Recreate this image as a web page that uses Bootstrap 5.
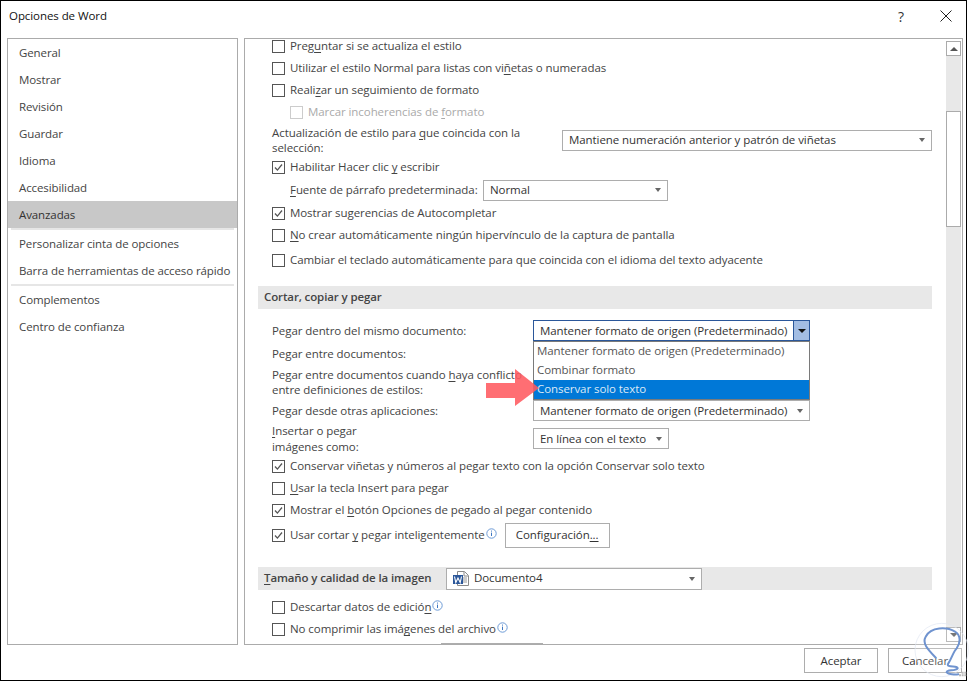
<!DOCTYPE html>
<html lang="es">
<head>
<meta charset="utf-8">
<title>Opciones de Word</title>
<link href="https://cdn.jsdelivr.net/npm/bootstrap@5.3.0/dist/css/bootstrap.min.css" rel="stylesheet">
<style>
html,body{height:100%;}
body{margin:0;background:#fff;font-family:"Open Sans","Noto Sans",sans-serif;font-size:11.5px;letter-spacing:-.07px;color:#444;overflow:hidden;}
u{text-underline-offset:2px;}
.win{width:967px;height:681px;border:1px solid #000;background:#fff;position:relative;}
.tbar{height:37px;padding-left:8px;padding-bottom:7px;color:#111;}
.tbar-help{width:50px;text-align:center;color:#333;font-size:14px;}
.tbar-close{width:40px;text-align:center;line-height:0;}
.mainarea{height:607px;padding:0 3px 0 6px;gap:6px;}
.side{width:231px;border:1px solid #ababab;flex:none;}
.sitem{height:27px;padding-left:11px;line-height:27px;color:#444;letter-spacing:-.1px;white-space:nowrap;}
.sitem.on{background:#c8c8c8;color:#333;}
.ssep{height:2px;margin:0 3px;background:#e6e6e6;}
.panel{width:719px;border:1px solid #ababab;overflow:hidden;position:relative;flex:none;}
.scroller{width:700px;margin-top:-4px;padding:0 13px 0 13px;flex:none;}
.sb{width:15px;margin:2px 1px 2px 0;background:#e8e8e8;flex:none;}
.sb-btn{height:15px;width:15px;background:#fff;border:1px solid #ababab;flex:none;}
.sb-thumb{height:116px;margin-top:55px;background:#fff;border:1px solid #ababab;flex:none;}
.opt{height:22px;padding-left:14px;gap:5px;white-space:nowrap;}
.opt.sub{padding-left:32px;color:#aaa;}
.ind-32{padding-left:32px;}
.h-21{height:21px;padding-bottom:1px;}.h-24{height:24px;}.h-23{height:23px;}.h-28{height:28px;}.h-33{height:33px;}.h-34{height:34px;}
.wrapl{line-height:15.5px;white-space:normal;}
.cb{width:13px;height:13px;border:1px solid #555;background:#fff;flex:none;}
.sub .cb{border-color:#ccc;}
.cb svg{display:block;}
.sel{border:1px solid #adadad;background:#fff;height:21px;padding:0 6px;color:#333;flex:none;white-space:nowrap;position:relative;}
.sel.focusb{border-color:#2b579a;padding-right:0;}
.w-370{width:370px;}.w-185{width:185px;}.w-277{width:277px;}.w-136{width:136px;}.w-256{width:256px;height:22px;}
.caret-s{margin-left:auto;width:0;height:0;border-left:3.5px solid transparent;border-right:3.5px solid transparent;border-top:4px solid #666;flex:none;}
.drop-btn{width:16px;height:19px;background:#a3bde3;border-left:1px solid #2b579a;flex:none;margin-left:auto;}
.caret-d{width:0;height:0;border-left:4px solid transparent;border-right:4px solid transparent;border-top:4px solid #111;}
.sec{padding:0 6px;height:23px;background:#e8e8e8;width:674px;font-weight:600;letter-spacing:-.12px;color:#444;white-space:nowrap;flex:none;}
.sec-t{margin-top:-2px;}
.sec-l{width:182px;flex:none;margin-top:-2px;}
.mt-12{margin-top:12px;}.mt-10{margin-top:10px;}.mt-18{margin-top:18px;}.mt-6{margin-top:6px;}
.w-l-285{width:285px;flex:none;}
.w-l-256{width:256px;flex:none;}
.w-l-188{width:188px;flex:none;}
.pbtn{border:1px solid #adadad;background:#fff;color:#333;height:25px;width:105px;flex:none;margin-left:3px;}
.info{flex:none;margin-left:-4px;margin-top:-3px;}
.menu-ov{position:absolute;left:532px;top:340px;width:277px;height:59px;border:1px solid #7a7a7a;background:#fff;z-index:3;}
.menu-i{height:19px;padding-left:3px;line-height:18px;color:#555;white-space:nowrap;}
.menu-i.act{background:#0078d7;color:#dbe9f6;}
.arrow-ov{position:absolute;left:484px;top:367px;z-index:4;}
.partial{width:102px;height:10px;border:1px solid #adadad;margin-left:183px;margin-top:3px;}
.foot{height:35px;padding:3px 4px 0 0;gap:10px;}
.fbtn{width:74px;height:25px;border:1px solid #adadad;background:#fff;color:#333;}
.wm{position:absolute;left:904px;top:614px;z-index:5;}
</style>
</head>
<body>
<div class="win">
  <div class="tbar d-flex align-items-center">
    <span class="flex-grow-1">Opciones de Word</span>
    <span class="tbar-help">?</span>
    <span class="tbar-close"><svg width="12" height="12" viewBox="0 0 12 12"><path d="M.5.5l11 11M11.5.5l-11 11" stroke="#222" stroke-width="1" fill="none"/></svg></span>
  </div>
  <div class="mainarea d-flex">
    <div class="side">
      <div class="sitem">General</div>
      <div class="sitem">Mostrar</div>
      <div class="sitem">Revisión</div>
      <div class="sitem">Guardar</div>
      <div class="sitem">Idioma</div>
      <div class="sitem">Accesibilidad</div>
      <div class="sitem on">Avanzadas</div>
      <div class="ssep"></div>
      <div class="sitem">Personalizar cinta de opciones</div>
      <div class="sitem">Barra de herramientas de acceso rápido</div>
      <div class="ssep"></div>
      <div class="sitem">Complementos</div>
      <div class="sitem">Centro de confianza</div>
    </div>
    <div class="panel d-flex justify-content-between">
      <div class="scroller">
        <div class="opt d-flex align-items-center"><span class="cb"></span><span>Preg<u>u</u>ntar si se actualiza el estilo</span></div>
        <div class="opt d-flex align-items-center"><span class="cb"></span><span>Utilizar el estilo Normal para listas con vi<u>ñ</u>etas o numeradas</span></div>
        <div class="opt d-flex align-items-center"><span class="cb"></span><span>Reali<u>z</u>ar un seguimiento de formato</span></div>
        <div class="opt sub d-flex align-items-center"><span class="cb"></span><span>Marcar incoherencias de <u>f</u>ormato</span></div>
        <div class="opt h-34 d-flex align-items-center"><span class="wrapl w-l-285">Actualización de estilo para <u>q</u>ue coincida con la<br>selección:</span><span class="sel w-370 d-flex align-items-center">Mantiene numeración anterior y patrón de viñetas<i class="caret-s"></i></span></div>
        <div class="opt h-21 d-flex align-items-center"><span class="cb"><svg width="11" height="11" viewBox="0 0 11 11"><path d="M2 5.5l2.4 2.6L9 2.5" stroke="#555" stroke-width="1.3" fill="none"/></svg></span><span>Habilitar Hacer clic <u>y</u> escribir</span></div>
        <div class="opt ind-32 h-24 d-flex align-items-center"><span class="w-l-188"><u>F</u>uente de párrafo predeterminada:</span><span class="sel w-185 d-flex align-items-center">Normal<i class="caret-s"></i></span></div>
        <div class="opt d-flex align-items-center"><span class="cb"><svg width="11" height="11" viewBox="0 0 11 11"><path d="M2 5.5l2.4 2.6L9 2.5" stroke="#555" stroke-width="1.3" fill="none"/></svg></span><span>Mostrar sugerencias de Autocompletar</span></div>
        <div class="opt d-flex align-items-center"><span class="cb"></span><span><u>N</u>o crear automáticamente ningún hipervínculo de la captura de pantalla</span></div>
        <div class="opt h-28 d-flex align-items-center"><span class="cb"></span><span>Cambiar el teclado automáticamente para que coincida con el idioma del texto adyacente</span></div>

        <div class="sec mt-12 d-flex align-items-center"><span class="sec-t">Cortar, copiar y pegar</span></div>

        <div class="opt h-23 mt-10 d-flex align-items-center"><span class="w-l-256">Pegar dentro del mismo documento:</span><span class="sel w-277 focusb d-flex align-items-center">Mantener formato de origen (Predeterminado)<span class="drop-btn d-flex align-items-center justify-content-center"><i class="caret-d"></i></span></span></div>
        <div class="opt h-23 d-flex align-items-center"><span>Pegar entre documentos:</span></div>
        <div class="opt h-34 d-flex align-items-center"><span class="wrapl w-l-256">Pegar entre documentos cuando <u>h</u>aya conflicto<br>entre definiciones de estilos:</span></div>
        <div class="opt h-23 d-flex align-items-center"><span class="w-l-256">Pegar desde otras aplicaciones:</span><span class="sel w-277 d-flex align-items-center">Mantener formato de origen (Predeterminado)<i class="caret-s"></i></span></div>
        <div class="opt h-33 d-flex align-items-center"><span class="wrapl w-l-256"><u>I</u>nsertar o pegar<br>imágenes como:</span><span class="sel w-136 d-flex align-items-center">En línea con el texto<i class="caret-s"></i></span></div>
        <div class="opt d-flex align-items-center"><span class="cb"><svg width="11" height="11" viewBox="0 0 11 11"><path d="M2 5.5l2.4 2.6L9 2.5" stroke="#555" stroke-width="1.3" fill="none"/></svg></span><span>Conservar viñetas y números al pegar texto con la opción Conservar solo texto</span></div>
        <div class="opt d-flex align-items-center"><span class="cb"></span><span><u>U</u>sar la tecla Insert para pegar</span></div>
        <div class="opt d-flex align-items-center"><span class="cb"><svg width="11" height="11" viewBox="0 0 11 11"><path d="M2 5.5l2.4 2.6L9 2.5" stroke="#555" stroke-width="1.3" fill="none"/></svg></span><span>Mostrar el <u>b</u>otón Opciones de pegado al pegar contenido</span></div>
        <div class="opt h-28 d-flex align-items-center"><span class="cb"><svg width="11" height="11" viewBox="0 0 11 11"><path d="M2 5.5l2.4 2.6L9 2.5" stroke="#555" stroke-width="1.3" fill="none"/></svg></span><span>Usar cortar <u>y</u> pegar inteligentemente</span><svg class="info" width="11" height="11" viewBox="0 0 11 11"><circle cx="5.5" cy="5.5" r="4.7" fill="none" stroke="#6d9bd6"/><path d="M5.5 4.6v3.4M5.5 2.6v1" stroke="#3f78c2"/></svg><span class="pbtn d-flex align-items-center justify-content-center">Configuración<u>...</u></span></div>

        <div class="sec mt-18 d-flex align-items-center"><span class="sec-l"><u>T</u>amaño y calidad de la imagen</span>
          <span class="sel w-256 d-flex align-items-center fw-normal"><svg width="17" height="15" viewBox="0 0 17 15" class="me-1"><path d="M4.5 .5h7l4 4v10h-11z" fill="#fff" stroke="#8a8a8a"/><path d="M11 1v4h4" fill="none" stroke="#8a8a8a"/><path d="M10 7h4M10 9h4M10 11h4" stroke="#9a9a9a"/><rect x="0" y="4" width="10" height="9" fill="#2b579a"/><path d="M1.5 5.5l1.3 6 2.2-4.5 2.2 4.5 1.3-6" stroke="#fff" fill="none" stroke-width="1.1"/></svg><span class="sec-t">Documento4</span><i class="caret-s"></i></span></div>
        <div class="opt mt-6 d-flex align-items-center"><span class="cb"></span><span>Descartar datos de edició<u>n</u></span><svg class="info" width="11" height="11" viewBox="0 0 11 11"><circle cx="5.5" cy="5.5" r="4.7" fill="none" stroke="#6d9bd6"/><path d="M5.5 4.6v3.4M5.5 2.6v1" stroke="#3f78c2"/></svg></div>
        <div class="opt d-flex align-items-center"><span class="cb"></span><span>No comprimir las imá<u>g</u>enes del archivo</span><svg class="info" width="11" height="11" viewBox="0 0 11 11"><circle cx="5.5" cy="5.5" r="4.7" fill="none" stroke="#6d9bd6"/><path d="M5.5 4.6v3.4M5.5 2.6v1" stroke="#3f78c2"/></svg></div>
        <div class="partial"></div>
      </div>
      <div class="sb d-flex flex-column">
        <div class="sb-btn d-flex align-items-center justify-content-center"><svg width="8" height="4" viewBox="0 0 8 4"><path d="M0 4L4 0l4 4z" fill="#555"/></svg></div>
        <div class="sb-thumb"></div>
        <div class="sb-btn d-flex align-items-center justify-content-center mt-auto"><svg width="8" height="4" viewBox="0 0 8 4"><path d="M0 0l4 4 4-4z" fill="#555"/></svg></div>
      </div>
    </div>
  </div>
  <div class="foot d-flex justify-content-end">
    <span class="fbtn d-flex align-items-center justify-content-center">Aceptar</span>
    <span class="fbtn d-flex align-items-center justify-content-center">Cancelar</span>
  </div>
  <div class="menu-ov">
    <div class="menu-i">Mantener formato de origen (Predeterminado)</div>
    <div class="menu-i">Combinar formato</div>
    <div class="menu-i act">Conservar solo texto</div>
  </div>
  <svg class="arrow-ov" width="56" height="40" viewBox="0 0 56 40"><path d="M1 15h29V1l24 19-24 18V30H1z" fill="#ff5a60" fill-opacity=".88"/></svg>
  <svg class="wm" width="65" height="66" viewBox="0 0 195 198"><circle cx="110" cy="105" r="80" fill="#fff" fill-opacity=".2" stroke="#dfe6f2" stroke-width="2"/><path d="M92 128C70 105 50 85 62 65 78 35 125 35 150 50c20 12 15 35 5 50-10 10-15 30-25 45-10 15 30 5 28 15-8 10-33 2-33 12 5 6 25 8 35 6" fill="none" stroke="#6f93cf" stroke-width="6" stroke-linecap="round"/><path d="M170 170h6v6h-6zM178 170h6v6h-6zM170 178h6v6h-6zM178 178h6v6h-6zM162 178h6v6h-6z" fill="#bbb"/></svg>
</div>
</body>
</html>
